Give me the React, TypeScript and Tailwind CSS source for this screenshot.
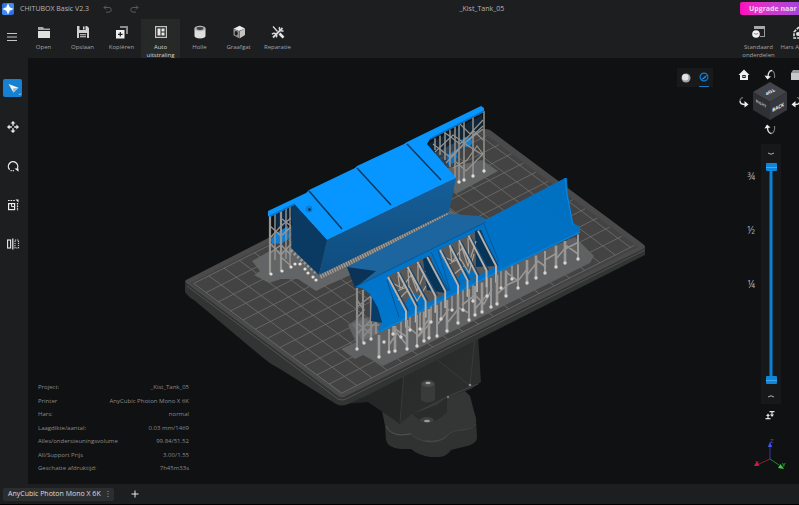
import { useState, type ReactNode } from "react";

type Tool = {
  label: string;
  icon: ReactNode;
};

const leftTools: Tool[] = [
  {
    label: "Open",
    icon: (
      <>
        <path d="M1 2h5l1 1.500h6V5H1z" fill="#a9a9a9" />
        <path d="M1 6h12v7H1z" fill="#e0e0e0" />
      </>
    ),
  },
  {
    label: "Opslaan",
    icon: (
      <>
        <path d="M1 1h10l2 2v10H1z" fill="#d0d0d0" />
        <path d="M3.500 1h6v4h-6zM3 8h8v5H3z" fill="#1d1e20" />
        <path d="M7 1.500h1.500v3H7zM4 9.200h6v1H4zM4 11.200h6v1H4z" fill="#d8d8d8" />
      </>
    ),
  },
  {
    label: "Kopiëren",
    icon: (
      <>
        <path d="M5 1h8v8h-2V3H5z" fill="#8d8d8d" />
        <path d="M1 5h8.500v8.500H1z" fill="#f0f0f0" />
        <path d="M4.700 7h1.200v1.700h1.700v1.200H5.900v1.700H4.700V9.900H3V8.700h1.700z" fill="#1d1e20" />
      </>
    ),
  },
  {
    label: "Auto uitstraling",
    icon: (
      <>
        <rect x="1.600" y="1.600" width="10.800" height="10.800" fill="none" stroke="#c4c4c4" strokeWidth="1.200" />
        <path d="M3.500 3.500h3v7h-3zM7.500 3.500h3v3h-3zM7.500 7.500h3v3h-3z" fill="#e8e8e8" />
      </>
    ),
  },
  {
    label: "Holle",
    icon: (
      <>
        <path d="M1.500 3.500v7.500c0 1.500 2.500 2.500 5.500 2.500s5.500-1 5.500-2.500V3.500z" fill="#dedede" />
        <ellipse cx="7" cy="3.500" rx="5.500" ry="2.700" fill="#b4b4b4" />
        <ellipse cx="7" cy="3.500" rx="3.500" ry="1.400" fill="#3b3c3e" />
      </>
    ),
  },
  {
    label: "Graafgat",
    icon: (
      <>
        <path d="M7.500.8 13 3.500 7 6 1.500 3.800z" fill="#ececec" />
        <path d="M13 3.500V10l-5.500 3.500V6.200z" fill="#c2c2c2" />
        <path d="M1.500 3.800 7 6v7.200l-5.500-3z" fill="#929292" />
        <ellipse cx="4.200" cy="8.300" rx="1.500" ry="2.300" fill="#1d1e20" />
      </>
    ),
  },
  {
    label: "Reparatie",
    icon: (
      <>
        <path d="M2 12.500 11.500 3" stroke="#d8d8d8" strokeWidth="1.800" />
        <path d="M12.500 5.800A3 3 0 0 1 8.500 2M1 9.200a2.600 2.600 0 0 1 4.200 3.200" fill="none" stroke="#d8d8d8" strokeWidth="1.500" />
        <path d="m2 1.500 4.500 5" stroke="#d8d8d8" strokeWidth="1.300" />
        <path d="m8.500 8.500 4 4.200" stroke="#e8e8e8" strokeWidth="2.600" />
      </>
    ),
  },
];

const rightTools: Tool[] = [
  {
    label: "Standaard onderdelen",
    icon: (
      <>
        <path d="M2 1h11v11H8v-1h4V4H2z" fill="#9a9a9a" />
        <path d="M2 1h11v3H2z" fill="#a8a8a8" />
        <circle cx="4" cy="9" r="3.800" fill="#f2f2f2" />
        <path d="m2.200 8.300 2 1 2-1" fill="none" stroke="#666" strokeWidth=".8" />
      </>
    ),
  },
  {
    label: "Hars A",
    icon: (
      <>
        <path d="M2 7 7 2l5 5v6H2z" fill="none" stroke="#e0e0e0" strokeWidth="1.600" strokeDasharray="3 1" />
        <circle cx="6" cy="9" r="2" fill="#e0e0e0" />
      </>
    ),
  },
];

const sideTools: Tool[] = [
  {
    label: "Selecteren",
    icon: (
      <>
        <path d="m2.500 3 10 3.800-5 4.700z" fill="#f4f4f4" />
        <path d="m7 7.500 5.500-.7-5 4.700z" fill="#a5b4c0" />
        <path d="M14.500 12v2h-2z" fill="#9ccbf0" />
      </>
    ),
  },
  {
    label: "Verplaatsen",
    icon: (
      <path
        d="m7 1 2.500 2.600h-5zM7 13l2.500-2.600h-5zM1 7l2.600-2.500v5zM13 7l-2.600-2.500v5zM6.300 3.500h1.400v2.300H6.300zM6.300 8.200h1.400v2.300H6.300zM3.500 6.300h2.300v1.400H3.500zM8.200 6.300h2.300v1.400H8.200z"
        fill="#ededed"
      />
    ),
  },
  {
    label: "Roteren",
    icon: (
      <>
        <path d="M3.600 10.600A4.700 4.700 0 1 1 11 10" fill="none" stroke="#ededed" strokeWidth="1.300" />
        <path d="M8.500 9.500h4v3.200z" fill="#ededed" />
        <path d="M4.500 11.600h4" stroke="#ededed" strokeWidth="1.200" strokeDasharray="1.200 1" />
      </>
    ),
  },
  {
    label: "Schalen",
    icon: (
      <>
        <rect x="2.600" y="5.600" width="6" height="6" fill="none" stroke="#ededed" strokeWidth="1.200" />
        <path d="M5.600 5.600v3h3" fill="none" stroke="#ededed" />
        <path d="M2 2.500h7M11.500 5v8" stroke="#ededed" strokeWidth="1.200" strokeDasharray="1.600 1" />
        <path d="M9.500 1.500h3v3z" fill="#ededed" />
      </>
    ),
  },
  {
    label: "Spiegelen",
    icon: (
      <>
        <rect x="1.600" y="3" width="3" height="8" fill="none" stroke="#ededed" strokeWidth="1.100" />
        <path d="M6.800 1.500v11" stroke="#ededed" strokeWidth="1.200" />
        <path d="M9 3h3.500v8H9z" fill="none" stroke="#c8c8c8" strokeWidth="1.200" strokeDasharray="1.200 .9" />
      </>
    ),
  },
];

const info = [
  ["Project:", "_Kist_Tank_05"],
  ["Printer", "AnyCubic Photon Mono X 6K"],
  ["Hars:", "normal"],
  ["Laagdikte/aantal:", "0.03 mm/1469"],
  ["Alles/ondersteuningsvolume", "99.84/51.52"],
  ["All/Support Prijs", "3.00/1.55"],
  ["Geschatte afdruktijd:", "7h45m33s"],
];

function Icon({ children }: { children: ReactNode }) {
  return (
    <svg viewBox="0 0 14 14" className="h-[14px] w-[14px] shrink-0 overflow-visible" aria-hidden="true">
      {children}
    </svg>
  );
}

// build plate corners: left, plus the long and the short edge as vectors
const plate = { x: 187, y: 283, lx: 301, ly: -152, sx: 155, sy: 115 };

const onPlate = (u: number, v: number) =>
  [plate.x + u * plate.lx + v * plate.sx, plate.y + u * plate.ly + v * plate.sy] as const;

const gridLine = (u1: number, v1: number, u2: number, v2: number) => {
  const [x1, y1] = onPlate(u1, v1);
  const [x2, y2] = onPlate(u2, v2);
  return `M${x1.toFixed(1)} ${y1.toFixed(1)}L${x2.toFixed(1)} ${y2.toFixed(1)}`;
};

const gridPath = [
  ...Array.from({ length: 20 }, (_, i) => gridLine(0.012 + i * 0.0505, 0.02, 0.012 + i * 0.0505, 0.975)),
  ...Array.from({ length: 13 }, (_, i) => gridLine(0.012, 0.02 + i * 0.0795, 0.985, 0.02 + i * 0.0795)),
].join("");

type Point = [number, number];

// feet of the supports under the front hull
const frontFeet: Point[] = [
  [379, 357], [389, 352], [395, 351], [407, 349], [417, 346], [424, 341], [429, 338], [437, 336],
  [447, 331], [458, 323], [469, 320], [475, 315], [482, 312], [491, 307], [497, 304], [506, 296],
  [518, 288], [527, 283], [536, 278], [545, 273], [556, 267], [565, 263], [578, 259],
];

const backFeet: Point[] = [
  [393, 334], [401, 337], [410, 330], [420, 329], [431, 322], [441, 319], [452, 310], [463, 310],
  [473, 301], [487, 296], [501, 288], [512, 279],
];

const hullEdge = (x: number) => 332 - (x - 381) * 0.5;

const rearPosts: Point[] = [
  [435, 150], [440, 155], [445, 160], [450, 167], [455, 178], [459, 182], [464, 180], [473, 176], [484, 171],
];

const leftPosts: Point[] = [[270, 274], [275, 260], [281, 271], [286, 259], [290, 266]];

const slats1 = Array.from({ length: 5 }, (_, i) => [388 + i * 9.800, 277 - i * 5, 406 + i * 9.800, 311 - i * 5]);
const slats2 = Array.from({ length: 5 }, (_, i) => [440 + i * 9.500, 250 - i * 4.800, 458 + i * 9.500, 285 - i * 4.800]);

function Scene() {
  return (
    <svg viewBox="28 58 771 426" className="absolute inset-0 h-full w-full" role="img" aria-label="Bouwplaat met model">
      <defs>
        <linearGradient id="bracket" x1="0" y1="0" x2="1" y2="1">
          <stop offset="0" stopColor="#262727" />
          <stop offset="1" stopColor="#2e2f2f" />
        </linearGradient>
        <linearGradient id="hull" x1="0" y1="1" x2="1" y2="0">
          <stop offset="0" stopColor="#0077cd" />
          <stop offset="1" stopColor="#006fc0" />
        </linearGradient>
        <linearGradient id="wall" x1="0" y1="0" x2="0" y2="1">
          <stop offset="0" stopColor="#165f99" />
          <stop offset="1" stopColor="#0f4c7d" />
        </linearGradient>
      </defs>

      {/* mounting knob */}
      <path d="M381 405 385 426 386 440Q388 448 400 449L411 449Q418 455 430 457L440 457Q447 456 451 450L467 446Q476 444 477 438L476 418Q472 408 470 398L462 388 400 390Z" fill="#303131" />
      <path d="M381 405 385 424Q388 434 401 435L411 434Q418 441 430 442 440 442 447 436 452 430 463 430 475 428 476 419L470 396 462 388 400 388Z" fill="#343535" />
      <path d="M386 426Q389 434 401 435L411 434M425 441Q440 443 447 436" fill="none" stroke="#535454" strokeWidth="1" />
      <path d="M411 434Q418 441 430 442 440 442 447 436 452 430 463 430 473 429 475 424" fill="none" stroke="#414242" strokeWidth="1" />
      <path d="M366 398 478 335 481 382 471 389 447 398 412 414 400 424 378 406Z" fill="url(#bracket)" />
      <path d="M345 404 404 372 400 424 368 402Z" fill="#252626" />
      <path d="M404 372 400 422M435 358 469 385M475 338 470 385" fill="none" stroke="#383939" />
      <path d="M412 415 447 397 470 387 478 384" fill="none" stroke="#424343" />
      <path d="M421 384Q421 380 428 380T435 384V400Q428 405 421 400Z" fill="#393a3a" />
      <ellipse cx="428" cy="384" rx="6" ry="3" fill="#4a4b4b" />
      <ellipse cx="428" cy="383" rx="2.500" ry="1.200" fill="#a8a8a8" />
      <path d="M412 414 437 405 447 397V412Q436 424 424 423Z" fill="#2a2b2b" />
      <ellipse cx="427" cy="420" rx="7" ry="3" fill="#3e3f3f" />
      <ellipse cx="427" cy="421" rx="3" ry="1.200" fill="#9a9a9a" />
      <circle cx="448" cy="397" r="1.200" fill="#777" />
      <circle cx="470" cy="385" r="1.300" fill="#888" />

      {/* plate */}
      <path d="M185 283 185 292Q188 297 194 300L262 357Q270 364 280 369L336 404Q342 407 348 404L366 396 645 255 645 247 487 130Z" fill="#323333" />
      <path d="M185 282Q185 280 188 279L480 130Q485 128 490 130L643 244Q647 247 643 249L346 396Q342 399 338 396Z" fill="#4a4a4a" />
      <path d="M190 283 485 134 638 247 343 393Z" fill="#434343" />
      <path d={gridPath} fill="none" stroke="#6f6e6c" strokeWidth=".8" />
      <path d="M187 286 338 399Q342 401 346 399L645 250" fill="none" stroke="#5a5b5b" strokeWidth=".8" />

      {/* rafts */}
      <path d="M252 261 268 252 292 248 318 268 448 208 462 218 480 216 430 240 328 285 316 291 298 279 281 279 269 283 254 275 260 271Z" fill="#626465" />
      <path d="M440 170 482 160 498 171 456 194Z" fill="#626465" />
      <path d="M341 349 356 342 348 325 360 317 380 320 575 237 594 256 590 263 383 366 363 355 355 359Z" fill="#5f6162" />
      <path d="M352 324 366 318 380 332 362 341Z" fill="#6b6d6e" />

      {/* rear supports */}
      <path d="M428 144 482 115 483 128 440 172Z" fill="#173f5f" opacity=".45" />
      <circle cx="467" cy="142" r="5" fill="#0b83dd" />
      <path d="M447 155 458 148 456 162 448 165Z" fill="#0b74c6" />
      <g fill="none" stroke="#96938f" strokeWidth="1.500">
        {rearPosts.map(([x, y]) => (
          <path key={x} d={`M${x} ${141 - (x - 430) * 0.56}V${y}`} />
        ))}
        <path d="m433 144 17 13 16-15 17-16M435 152l18-17 14 10 16 10M446 163l20-21 17-13M444 132l16 12 14-13 9 9M453 168l14-8 10-14 6 8M456 162l10 9 17-17M458 122l12 12 13-14" strokeWidth="1.200" />
      </g>
      <g fill="#dedbd6">
        {rearPosts.slice(5).map(([x, y]) => (
          <circle key={x} cx={x} cy={y} r="1.700" />
        ))}
      </g>

      {/* left supports */}
      <path d="M275 215 289 209 288 226 277 230Z" fill="#0b2a45" />
      <path d="M271 240 276 233 288 226 289 238 281 244 272 243Z" fill="#0c80d8" />
      <g fill="none" stroke="#969492" strokeWidth="1.500">
        {leftPosts.map(([x, y]) => (
          <path key={x} d={`M${x} ${216 - (x - 270) * 0.5}V${y}`} strokeWidth={x === 270 || x === 281 ? 2.200 : 1.400} />
        ))}
        <path d="m270 238 11-12 10-8M270 226l11 10 10-9M270 253l11-8 10 10M271 244l10 11 10-11M282 258l9 8M282 219l9 7" />
      </g>
      <path d="M292 249 319 273" stroke="#9d9b98" strokeWidth="7" strokeDasharray="2 2.500" />
      <path d="M320 276 449 214" stroke="#a29b93" strokeWidth="6" strokeDasharray="1.500 1.100" />
      <g fill="#e2dfda">
        {([[271, 274], [282, 271], [291, 267], [295, 264], [300, 264], [305, 269], [308, 273], [313, 277], [316, 280]] as Point[]).map(([x, y]) => (
          <circle key={x} cx={x} cy={y} r="1.600" />
        ))}
      </g>

      {/* closed hull */}
      <path d="M268 211 306 193 309 190 355 168 357 166 404 144 407 142 481 106 484 108 484 112 430 139 427 144 456 178 327 240 295 205 270 217 268 216Z" fill="#0796ff" />
      <path d="M430 139 484 111M270 216 295 204" stroke="#0672c5" strokeWidth="1.500" />
      <path d="M291 207 295 205 327 240 319 275 292 249Z" fill="#0a3a61" />
      <path d="M327 240 456 178 449 212 319 275Z" fill="url(#wall)" />
      <path d="M309 191 342 229M357 168 391 205M407 144 441 180" stroke="#0a3b63" strokeWidth="1.600" />
      <circle cx="309" cy="209" r="3" fill="#0e83dc" stroke="#0b6bb4" strokeWidth=".6" />
      <circle cx="309.500" cy="209.500" r="1.300" fill="#06233b" />

      {/* open hull, inner floor */}
      <path d="M347 267 449 214 480 216 490 221 357 287Z" fill="#1d659f" />
      <path d="M347 267 376 271 355 288Z" fill="#0a3357" />

      {/* supports behind the open hull */}
      <g fill="none" stroke="#8b8b8b">
        {backFeet.map(([x, y]) => (
          <path key={x} d={`M${x} ${hullEdge(x) - 6}V${y}`} strokeWidth="2" />
        ))}
        <path d="M357 288V349M363 290V343M371 297V339M376 318V334" strokeWidth="2.200" />
        <path d="m357 307 14-11M357 318l7-8-7-10M357 334l14-14M357 323l14 11M363 337l13-15M367 325h12" strokeWidth="1.500" />
      </g>

      {/* open hull, shell */}
      <path d="M363 286 372 294 371 321 382 323 384 311 379 297 370 287Z" fill="#0a3b66" />
      <path d="M355 287 480 225 487 219 565 178 567 178 568 194 573 223 580 227 580 233 497 273 381 332 378 331 382 322 378 308 370 294 362 288Z" fill="url(#hull)" />
      <path d="M565 178 567 195 573 225M381 331 497 272 580 232" fill="none" stroke="#0a88e4" strokeWidth="1" />
      <path d="M387 277 430 255 446 294 406 313Z" fill="#5a5856" />
      <path d="M423 259 429 256 445 293 427 290Z" fill="#07355a" />
      <path d="M439 250 479 230 497 266 458 286Z" fill="#5c5a58" />
      <path d="M475 231 481 230 496 266 476 267Z" fill="#07355a" />
      <path d="M400 311 412 292 424 299 428 302 406 313ZM455 283 464 268 478 274 458 286Z" fill="#0072c6" />
      <path d="M387 280 399 317M431 252 449 291M438 250 450 291M484 224 499 262M357 286 486 222" stroke="#07579a" fill="none" />
      <path d="m390 282 12 6 9-13 6 16 8-20M395 292l14-6 8 15 9-15M398 300l9-9M442 256l11 5 9-13 6 18 8-25M447 265l13-7 9 15 5-19M453 275l11-9M398 275l2 14M408 270l1 18M418 265v24M450 247l2 16M459 243l1 18M468 238l1 26" fill="none" stroke="#a9a29a" strokeWidth="1.200" />
      <g stroke="#1b456a" strokeWidth="1.600">
        {[...slats1, ...slats2].map(([x1, y1, x2, y2]) => (
          <path key={x1} d={`M${x1 + 2} ${y1 + 1}L${x2 + 2} ${y2}`} />
        ))}
      </g>
      <g stroke="#b5b2ae" strokeWidth="1.900">
        {[...slats1, ...slats2].map(([x1, y1, x2, y2]) => (
          <path key={x1} d={`M${x1} ${y1}L${x2} ${y2}V${hullEdge(x2) + 8}`} fill="none" />
        ))}
      </g>

      {/* front supports */}
      <g fill="none" stroke="#999795">
        {frontFeet.map(([x, y], i) => (
          <path key={x} d={`M${x} ${hullEdge(x) + (i ? 1 : 2)}V${y}`} strokeWidth={i % 3 === 1 ? 2 : 2.600} />
        ))}
        <path
          d="m389 345 8-12 9 11M395 329l12 8M417 338l11-18M407 326l12 10 12-14M437 325l12-16M448 322l11-14 10 5M462 305l13-10 9 9 8-15M475 309l12-14M497 294l12-10 9-4M506 272l12 9 10-13M527 275l11-14 8 6M545 260l12-7M556 259l11-13 11 8M565 249l14-7"
          strokeWidth="1.600"
        />
      </g>
      <g fill="#d4d3d1">
        {[...frontFeet, ...backFeet, [357, 349] as Point, [364, 343] as Point, [371, 339] as Point, [384, 342] as Point].map(([x, y]) => (
          <circle key={`${x}-${y}`} cx={x} cy={y} r="1.700" />
        ))}
      </g>
    </svg>
  );
}

// bright stroke carries the head, the dim one is the tail
const turns = {
  up: { head: "M4 8C4 4 5.500 1.500 8 1.500", tail: "M8 1.500C10 2.500 11 5 10.500 9", tip: "M.5 6.500 7 7.500 3.500 10.500z" },
  left: { head: "M2 5C2 7.500 4 8.500 7 8.500", tail: "M5 1.500C3 2 2 3 2 5", tip: "M6.500 5v6.500l4-3z" },
  right: { head: "M10 5C10 7.500 8 8.500 5 8.500", tail: "M7 1.500C9 2 10 3 10 5", tip: "M5.500 5v6.500l-4-3z" },
  down: { head: "M3.500 4C3.500 8 5 10.500 7.500 10.500", tail: "M7.500 10.500C10 9.500 11 7 10.500 3", tip: "M.5 5.500 6.500 4.500 3 1.500z" },
};

function TurnArrow({ label, turn }: { label: string; turn: keyof typeof turns }) {
  const { head, tail, tip } = turns[turn];
  return (
    <button aria-label={label} className="flex items-center justify-center">
      <svg viewBox="0 0 12 12" className="h-[12px] w-[12px]" fill="none" aria-hidden="true">
        <path d={tail} stroke="#777" strokeWidth="1.200" />
        <path d={head} stroke="#e4e4e4" strokeWidth="1.400" />
        <path d={tip} fill="#f0f0f0" />
      </svg>
    </button>
  );
}

function ViewCube() {
  return (
    <div className="grid auto-rows-[27px] grid-cols-[26px_26px_26px]">
      <button aria-label="Startweergave" className="flex items-center justify-center">
        <svg viewBox="0 0 12 12" className="h-[12px] w-[12px]" aria-hidden="true">
          <path d="M6 .5 11.500 6H10v5H2V6H.5z" fill="#f0f0f0" />
          <path d="M4.300 6h3.400v3H4.300z" fill="#222" />
          <path d="M5.300 7h1.400v1H5.300z" fill="#f0f0f0" />
        </svg>
      </button>
      <TurnArrow label="Omhoog" turn="up" />
      <button aria-label="Perspectief" className="flex items-center justify-center">
        <svg viewBox="0 0 12 12" className="h-[12px] w-[12px]" aria-hidden="true">
          <path d="M3 1h9v10H1V4z" fill="#9b9b9b" />
          <path d="M1 4h9v7H1z" fill="#c8c8c8" />
        </svg>
      </button>
      <TurnArrow label="Links" turn="left" />
      <svg viewBox="0 0 34 38" className="-mx-1 -my-[6px] h-[38px] w-[34px]" role="img" aria-label="Weergavekubus">
        <path d="M17 0 34 10 17 20 0 10Z" fill="#434449" />
        <path d="M0 10 17 20V38L0 28Z" fill="#2f3034" />
        <path d="M34 10 17 20V38L34 28Z" fill="#37383d" />
        <g fill="#f0f0f0" fontFamily="Open Sans, sans-serif" fontWeight="700" textAnchor="middle">
          <text fontSize="5" transform="matrix(-.87 .45 -.6 -.6 16 9)">TOP</text>
          <text fontSize="4" transform="matrix(.87 .5 0 1 8 23)" fill="#b9b9b9">RIGHT</text>
          <text fontSize="5" transform="matrix(.87 -.45 0 1 25 27)">BACK</text>
        </g>
      </svg>
      <TurnArrow label="Rechts" turn="right" />
      <span />
      <TurnArrow label="Omlaag" turn="down" />
    </div>
  );
}

const rangeClass =
  "pointer-events-none absolute inset-0 m-0 h-full w-full cursor-pointer appearance-none bg-transparent [direction:rtl] [writing-mode:vertical-lr] [&::-webkit-slider-thumb]:pointer-events-auto [&::-webkit-slider-thumb]:h-[8px] [&::-webkit-slider-thumb]:w-[11px] [&::-webkit-slider-thumb]:appearance-none [&::-webkit-slider-thumb]:rounded-[1px] [&::-webkit-slider-thumb]:border-0 [&::-webkit-slider-thumb]:bg-[linear-gradient(#0d86dc_4px,#4aa4e6_4px,#4aa4e6_5px,#0d86dc_5px)]";

function LayerSlider() {
  const [top, setTop] = useState(1469);
  const [bottom, setBottom] = useState(0);

  return (
    <div className="flex">
      <div className="mt-[5px] flex w-[30px] flex-col pr-[6px] text-right text-[10px] leading-[54px] text-[#b4b4b4]">
        <span>¾</span>
        <span>½</span>
        <span>¼</span>
      </div>
      <div className="flex w-[20px] flex-col bg-[#16181a]">
        <button aria-label="Laag omlaag" className="flex h-[19px] items-center justify-center">
          <svg viewBox="0 0 8 4" className="h-[4px] w-[8px]" aria-hidden="true">
            <path d="M1 1Q4 3.500 7 1" fill="none" stroke="#b0b0b0" />
          </svg>
        </button>
        <div className="relative h-[221px]">
          <div className="absolute inset-y-1 left-1/2 w-[3px] -translate-x-1/2 bg-[#0d80d2]" />
          <input
            type="range"
            aria-label="Bovenste laag"
            min={0}
            max={1469}
            value={top}
            onChange={(e) => setTop(Math.max(Number(e.target.value), bottom))}
            className={rangeClass}
          />
          <input
            type="range"
            aria-label="Onderste laag"
            min={0}
            max={1469}
            value={bottom}
            onChange={(e) => setBottom(Math.min(Number(e.target.value), top))}
            className={rangeClass}
          />
        </div>
        <button aria-label="Laag omhoog" className="flex h-[20px] items-center justify-center pt-1">
          <svg viewBox="0 0 8 4" className="h-[4px] w-[8px]" aria-hidden="true">
            <path d="M1 3Q4 .5 7 3" fill="none" stroke="#b0b0b0" />
          </svg>
        </button>
      </div>
    </div>
  );
}

function AxisGizmo() {
  return (
    <svg viewBox="0 0 36 32" className="h-[32px] w-[36px]" role="img" aria-label="Assen">
      <path d="M18 21V8" stroke="#34389c" />
      <path d="m18 4 2.200 5h-4.400z" fill="#4a4ff0" />
      <path d="M18 21 7 26" stroke="#8c1d33" />
      <path d="m2 28 3-4.500 2.500 4z" fill="#ee1d49" />
      <path d="m18 21 9 6" stroke="#1f8a2e" />
      <path d="m32 31-6-1 2.500-4z" fill="#35d03c" />
      <g fontFamily="Open Sans, sans-serif" fontSize="6" fontWeight="600">
        <text x="18" y="5" fill="#4044b4">Z</text>
        <text x="3" y="27" fill="#c01a3c">X</text>
        <text x="30" y="29" fill="#2aa935">Y</text>
      </g>
    </svg>
  );
}

function ToolButton({ tool, active }: { tool: Tool; active?: boolean }) {
  return (
    <button
      className={`flex w-[39px] shrink-0 flex-col items-center gap-1 pt-[6px] text-[6px] leading-[8px] ${
        active ? "bg-[#272929] text-[#d6d6d6]" : "text-[#a3a3a3]"
      }`}
    >
      <Icon>{tool.icon}</Icon>
      <span>{tool.label}</span>
    </button>
  );
}

export default function App() {
  const [sideTool, setSideTool] = useState("Selecteren");

  return (
    <div className="flex h-screen min-h-[480px] flex-col overflow-hidden bg-[#1d1e20] font-['Open_Sans','Noto_Sans',sans-serif] text-[#b5b5b5]">
      <header className="shrink-0">
        <div className="flex h-[19px] items-start text-[7px] leading-[17px]">
          <div className="flex h-[17px] w-[57.5%] items-center">
            <svg viewBox="0 0 12 12" className="ml-[2px] h-[12px] w-[12px]" aria-hidden="true">
              <rect width="12" height="12" rx="2" fill="#2f6fe4" />
              <path d="M0 6 6 0h4a2 2 0 0 1 2 2v4L6 12H2a2 2 0 0 1-2-2z" fill="#3e8bf2" />
              <path d="M6 2 7.200 4.800 10 6 7.200 7.200 6 10 4.800 7.200 2 6 4.800 4.800z" fill="#fff" stroke="#fff" strokeWidth="1.200" />
            </svg>
            <h1 className="ml-[6px] w-[83px]">CHITUBOX Basic V2.3</h1>
            <button aria-label="Ongedaan maken" className="mr-[18px]">
              <svg viewBox="0 0 9 8" className="h-[8px] w-[9px]" fill="none" stroke="#5a5b5d" aria-hidden="true">
                <path d="M3 .5 1 2.500l2 2M1 2.500h5a2.300 2.300 0 0 1 0 4.600H3" />
              </svg>
            </button>
            <button aria-label="Opnieuw">
              <svg viewBox="0 0 9 8" className="h-[8px] w-[9px]" fill="none" stroke="#5a5b5d" aria-hidden="true">
                <path d="m6 .5 2 2-2 2M8 2.500H3a2.300 2.300 0 0 0 0 4.600h3" />
              </svg>
            </button>
          </div>
          <p>_Kist_Tank_05</p>
          <button className="mt-[2px] ml-auto h-[13px] w-[59px] overflow-hidden rounded-l-[2px] bg-linear-to-r from-[#fb08bd] to-[#a743dc] pl-[9px] text-left text-[7px] leading-[13px] font-bold whitespace-nowrap text-[#f6d5f4]">
            Upgrade naar
          </button>
        </div>

        <div className="flex h-[39px]">
          <button aria-label="Menu" className="flex w-6 shrink-0 items-center justify-center pb-[3px]">
            <svg viewBox="0 0 10 8" className="h-[8px] w-[10px]" stroke="#c4c4c4" aria-hidden="true">
              <path d="M0 .5h10M0 4h10M0 7.500h10" />
            </svg>
          </button>
          {leftTools.map((tool) => (
            <ToolButton key={tool.label} tool={tool} active={tool.label === "Auto uitstraling"} />
          ))}
          <div className="ml-auto flex w-[60px] overflow-hidden">
            <ToolButton tool={rightTools[0]} />
            <button className="flex w-[21px] flex-col items-end gap-1 pt-[6px] text-[6px] leading-[8px] whitespace-nowrap text-[#a3a3a3]">
              <span className="flex w-[7px]">
                <Icon>{rightTools[1].icon}</Icon>
              </span>
              <span>{rightTools[1].label}</span>
            </button>
          </div>
        </div>
      </header>

      <div className="flex min-h-0 flex-1">
        <nav className="flex w-7 shrink-0 flex-col gap-[21px] pt-[21px] pl-[3px]">
          {sideTools.map((tool) => (
            <button
              key={tool.label}
              aria-label={tool.label}
              onClick={() => setSideTool(tool.label)}
              className={`flex h-[18px] w-[19px] items-center justify-center rounded-[2px] ${
                sideTool === tool.label ? "bg-[#1680d2]" : ""
              }`}
            >
              <Icon>{tool.icon}</Icon>
            </button>
          ))}
        </nav>

        <main className="relative flex-1 overflow-hidden bg-[#101112]">
          <Scene />

          <div className="absolute top-[10px] right-[86px] flex h-[19px] bg-[#18191b]">
            <button aria-label="Gevuld" className="flex w-[18px] items-center justify-center">
              <svg viewBox="0 0 10 10" className="h-[10px] w-[10px]" aria-hidden="true">
                <circle cx="5" cy="5" r="4.500" fill="#a0a0a0" />
                <circle cx="4.300" cy="4.300" r="3.200" fill="#e4e4e4" />
              </svg>
            </button>
            <button aria-label="Arcering" className="flex w-[18px] flex-col items-center justify-between pt-1">
              <svg viewBox="0 0 10 10" className="h-[10px] w-[10px]" aria-hidden="true">
                <circle cx="5" cy="5" r="3.900" fill="#0d2033" stroke="#167bc9" strokeWidth="1.200" />
                <path d="M2 7.800Q6.500 7.500 8 2.500L5 5z" fill="#2d8fdc" />
              </svg>
              <span className="h-px w-[10px] bg-[#1a78bf]" />
            </button>
          </div>

          <div className="absolute top-[3px] right-0 flex w-[68px] flex-col overflow-hidden">
            <ViewCube />
            <div className="mt-[2px]">
              <LayerSlider />
            </div>
            <button aria-label="Lagen omwisselen" className="mt-[6px] flex h-[10px] w-[78px] items-center justify-center">
              <svg viewBox="0 0 10 10" className="h-[10px] w-[10px]" aria-hidden="true">
                <path d="M3 3.500 5 6H1zM2.400 5h1.200v3H2.400zM.5 8h5v1.200h-5z" fill="#e2e2e2" />
                <path d="M4.500 1h5v1.200h-5zM6.400 2h1.200v3H6.400zM7 7 5 4.500h4z" fill="#e2e2e2" />
              </svg>
            </button>
            <div className="mt-[18px] flex w-[78px] justify-center">
              <AxisGizmo />
            </div>
          </div>

          <dl className="absolute bottom-[11px] left-[10px] flex h-[90px] w-[151px] flex-col justify-between text-[6px] leading-[9px] text-[#8b8b8b]">
            {info.map(([term, value]) => (
              <div key={term} className="flex justify-between whitespace-nowrap">
                <dt>{term}</dt>
                <dd>{value}</dd>
              </div>
            ))}
          </dl>
        </main>
      </div>

      <footer className="flex h-[21px] shrink-0 items-center border-b border-black pl-[3px] text-[7px] text-[#dedede]">
        <div className="flex h-[13px] w-[111px] items-center justify-between rounded-[2px] bg-[#2c2d2f] pr-1 pl-[5px]">
          <span>AnyCubic Photon Mono X 6K</span>
          <button aria-label="Tabbladmenu">
            <svg viewBox="0 0 4 8" className="h-[8px] w-[4px]" fill="#9a9a9a" aria-hidden="true">
              <path d="M1.500 1h1v1h-1zM1.500 3.500h1v1h-1zM1.500 6h1v1h-1z" />
            </svg>
          </button>
        </div>
        <button aria-label="Nieuw tabblad" className="ml-[17px]">
          <svg viewBox="0 0 8 8" className="h-[8px] w-[8px]" stroke="#e8e8e8" aria-hidden="true">
            <path d="M4 .5v7M.5 4h7" />
          </svg>
        </button>
      </footer>
    </div>
  );
}
